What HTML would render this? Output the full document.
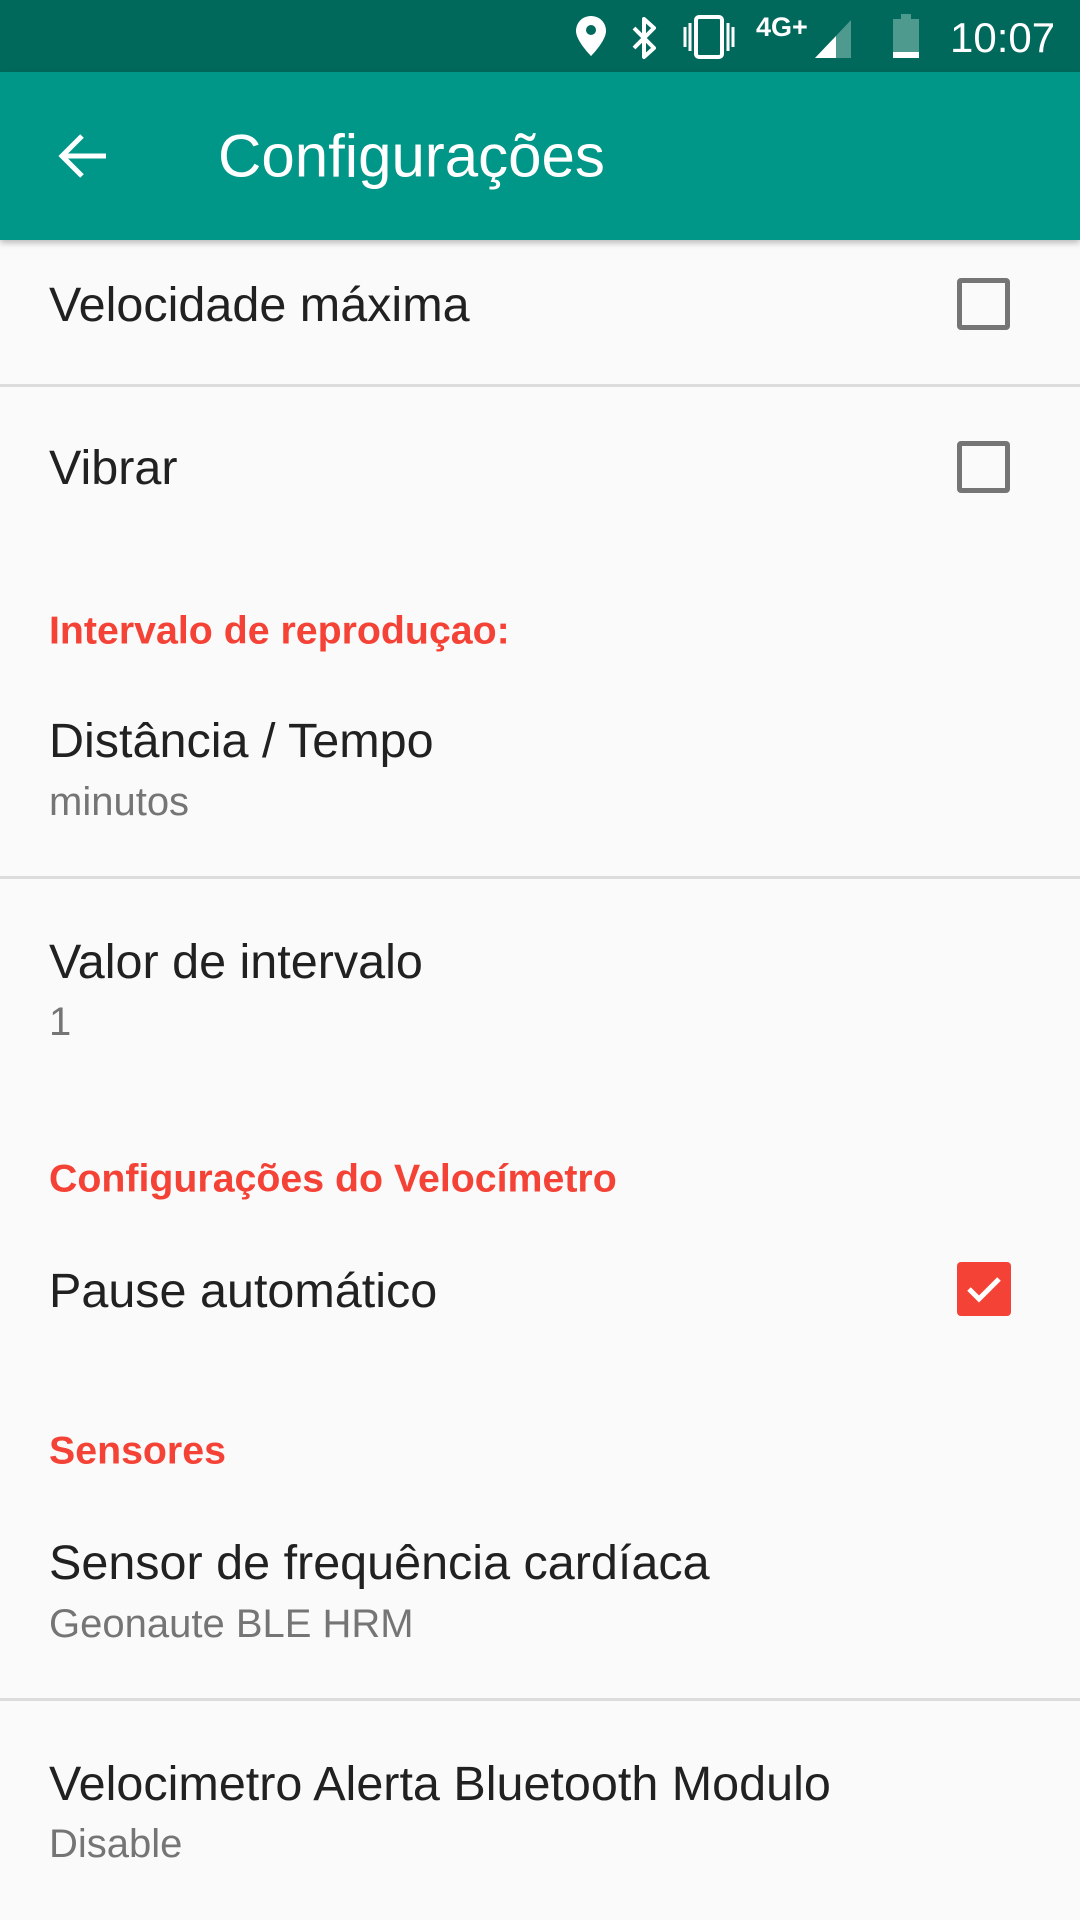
<!DOCTYPE html>
<html><head><meta charset="utf-8"><style>
body{margin:0;width:1080px;height:1920px;background:#fafafa;font-family:"Liberation Sans",Roboto,sans-serif;position:relative;overflow:hidden}
.sb{position:absolute;top:0;left:0;width:1080px;height:72px;background:#00695c}
.tb{position:absolute;top:72px;left:0;width:1080px;height:168px;background:#009688;box-shadow:0 3px 6px rgba(0,0,0,.25)}
.t{position:absolute;left:49px;color:#212121;font-size:48.5px;line-height:1;transform:translateY(-50%);white-space:nowrap}
.s{position:absolute;left:49px;color:#757575;font-size:40px;line-height:1;transform:translateY(-50%)}
.h{position:absolute;left:49px;color:#f44336;font-size:39.3px;font-weight:bold;line-height:1;transform:translateY(-50%)}
.d{position:absolute;left:0;width:1080px;height:3px;background:#dcdcdc}
.cb{position:absolute;left:957px;width:53px;height:52px;border:5px solid #757575;border-radius:4px;box-sizing:border-box}
</style></head><body>
<div class="sb">
<svg style="position:absolute;left:574px;top:14px" width="34" height="44" viewBox="0 0 34 44"><path d="M17 2C8 2 2 9 2 17c0 10 15 25 15 25s15-15 15-25C32 9 26 2 17 2z" fill="#fff"/><circle cx="17" cy="16" r="5" fill="#00695c"/></svg>
<svg style="position:absolute;left:630px;top:16px" width="30" height="44" viewBox="0 0 30 44"><path d="M4 12l20 20-10 9V3l10 9L4 32" fill="none" stroke="#fff" stroke-width="4" stroke-linejoin="round"/></svg>
<svg style="position:absolute;left:682px;top:15px" width="56" height="44" viewBox="0 0 56 44"><rect x="14" y="2" width="26" height="40" rx="3" fill="none" stroke="#fff" stroke-width="4"/><path d="M3 12v20M8 8v28M46 8v28M51 12v20" stroke="#fff" stroke-width="3"/></svg>
<div style="position:absolute;left:756px;top:12px;color:#fff;font-size:27px;font-weight:bold">4G+</div>
<svg style="position:absolute;left:815px;top:20px" width="36" height="38" viewBox="0 0 36 38"><path d="M0 38L36 0V38z" fill="#4f9a8e"/><path d="M0 38L21 16V38z" fill="#fff"/></svg>
<svg style="position:absolute;left:893px;top:14px" width="26" height="44" viewBox="0 0 26 44"><rect x="8" y="0" width="10" height="5" fill="#4f9a8e"/><rect x="0" y="5" width="26" height="34" fill="#4f9a8e"/><rect x="0" y="38" width="26" height="6" fill="#fff"/></svg>
<div style="position:absolute;left:950px;top:14px;color:#fff;font-size:42px">10:07</div>
</div>
<div class="tb">
<svg style="position:absolute;left:58px;top:60px" width="52" height="48" viewBox="0 0 52 48"><path d="M24 4L4 24l20 20M4 24h44" fill="none" stroke="#fff" stroke-width="5"/></svg>
<div style="position:absolute;left:218px;top:50%;transform:translateY(-50%);color:#fff;font-size:60px;font-weight:500">Configurações</div>
</div>
<div class="t" style="top:305px">Velocidade máxima</div>
<div class="cb" style="top:278px"></div>
<div class="d" style="top:384px"></div>
<div class="t" style="top:468px">Vibrar</div>
<div class="cb" style="top:441px"></div>
<div class="h" style="top:631px">Intervalo de reproduçao:</div>
<div class="t" style="top:741px">Distância / Tempo</div>
<div class="s" style="top:802px">minutos</div>
<div class="d" style="top:876px"></div>
<div class="t" style="top:962px">Valor de intervalo</div>
<div class="s" style="top:1022px">1</div>
<div class="h" style="top:1179px">Configurações do Velocímetro</div>
<div class="t" style="top:1291px">Pause automático</div>
<div style="position:absolute;left:957px;top:1262px;width:54px;height:54px;background:#f44336;border-radius:4px"><svg width="54" height="54" viewBox="0 0 54 54"><path d="M12 27l10 10 20-20" fill="none" stroke="#fff" stroke-width="5"/></svg></div>
<div class="h" style="top:1451px">Sensores</div>
<div class="t" style="top:1563px">Sensor de frequência cardíaca</div>
<div class="s" style="top:1624px">Geonaute BLE HRM</div>
<div class="d" style="top:1698px"></div>
<div class="t" style="top:1784px">Velocimetro Alerta Bluetooth Modulo</div>
<div class="s" style="top:1844px">Disable</div>
</body></html>
